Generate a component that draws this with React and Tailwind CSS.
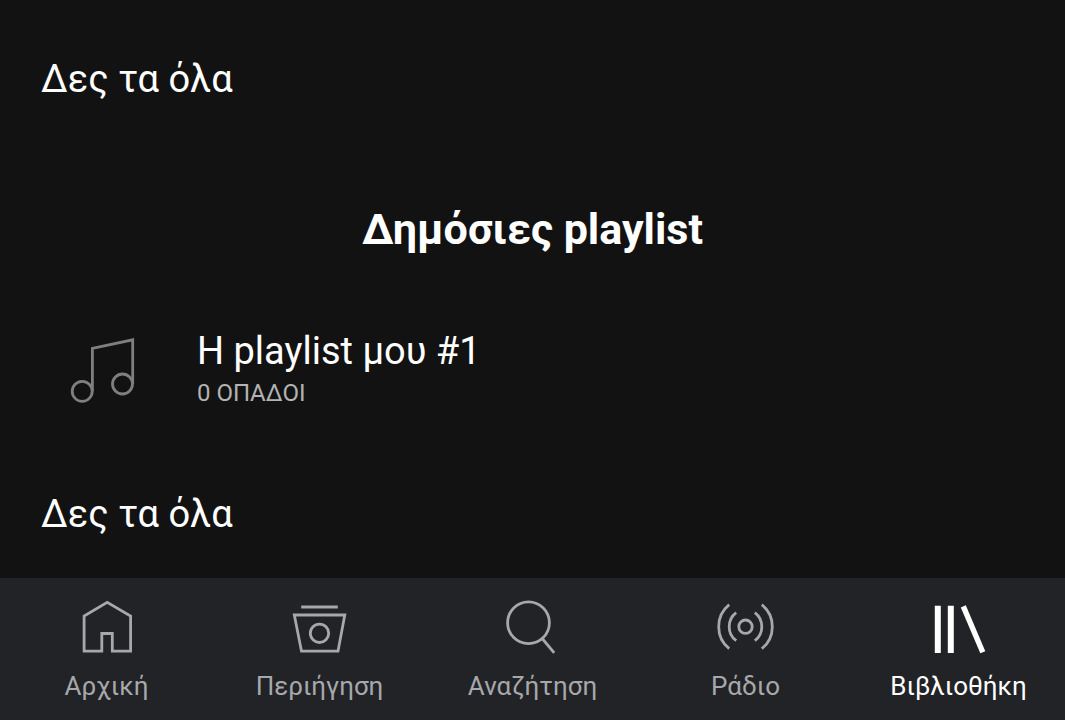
import React, { useState } from "react";
import clsx from "clsx";

const tabs = [
  { id: "home", label: "Αρχική", Icon: HomeIcon },
  { id: "browse", label: "Περιήγηση", Icon: BrowseIcon },
  { id: "search", label: "Αναζήτηση", Icon: SearchIcon },
  { id: "radio", label: "Ράδιο", Icon: RadioIcon },
  { id: "library", label: "Βιβλιοθήκη", Icon: LibraryIcon },
];

const playlists = [{ id: 1, name: "Η playlist μου #1", followers: 0 }];

function TabSvg({ children }) {
  return (
    <svg
      viewBox="0 0 64 64"
      className="size-16"
      fill="none"
      stroke="currentColor"
      strokeWidth="2.8"
      aria-hidden="true"
    >
      {children}
    </svg>
  );
}

function HomeIcon() {
  return (
    <TabSvg>
      <path d="M9.1 57.2V22L32.2 8.4L55.6 22V57.2H37.3V39.5H26.8V57.2Z" />
    </TabSvg>
  );
}

function BrowseIcon() {
  return (
    <TabSvg>
      <path d="M13.2 13H49.8M6.3 21H56.8L50 57.2H13.5Z" />
      <circle cx="31.5" cy="39.3" r="9.2" />
    </TabSvg>
  );
}

function SearchIcon() {
  return (
    <TabSvg>
      <circle cx="27.5" cy="28.8" r="20.9" />
      <path d="M41.2 44.5L53.2 58.8" />
    </TabSvg>
  );
}

function RadioIcon() {
  return (
    <TabSvg>
      <circle cx="31.5" cy="32.7" r="6.7" />
      <path d="M22.2 18.7A17.5 17.5 0 0 0 22.2 46.7M40.8 18.7A17.5 17.5 0 0 1 40.8 46.7" />
      <path d="M15.2 10.7A28.3 28.3 0 0 0 15.2 54.7M47.8 10.7A28.3 28.3 0 0 1 47.8 54.7" />
    </TabSvg>
  );
}

function LibraryIcon() {
  return (
    <TabSvg>
      <path strokeWidth="6" d="M10.8 11.7V59M23.8 11.7V59" />
      <path strokeWidth="5.4" d="M36.3 12.4L55.8 58.2" />
    </TabSvg>
  );
}

function NoteIcon() {
  return (
    <svg
      viewBox="0 0 72 72"
      className="size-18"
      fill="none"
      stroke="currentColor"
      strokeWidth="2.8"
      aria-hidden="true"
    >
      <circle cx="15.2" cy="56.3" r="10" />
      <circle cx="55.5" cy="49" r="10" />
      <path d="M25.4 56.3V13.4L65.7 4.8V49" />
    </svg>
  );
}

function SeeAll() {
  return (
    <a href="#all" className="block px-[41px] text-[38px] leading-12">
      Δες τα όλα
    </a>
  );
}

export default function App() {
  const [active, setActive] = useState("library");

  return (
    <div className="flex min-h-screen flex-col bg-[#121212] font-['Roboto',sans-serif] text-white">
      <main className="flex-1 pt-[55px] pb-10">
        <SeeAll />

        <h2 className="mt-[98px] text-center text-[43px] leading-14 font-bold">
          Δημόσιες playlist
        </h2>

        <ul className="mt-[70px] mb-[79px]">
          {playlists.map((item) => (
            <li key={item.id}>
              <a href="#playlist" className="flex gap-8 px-[41px]">
                <span className="flex w-31 justify-center pt-2 text-[#7f7f7f]">
                  <NoteIcon />
                </span>
                <span>
                  <span className="block text-[38px] leading-12">
                    {item.name}
                  </span>
                  <span className="block text-2xl leading-9 text-[#b3b3b3]">
                    {item.followers} ΟΠΑΔΟΙ
                  </span>
                </span>
              </a>
            </li>
          ))}
        </ul>

        <SeeAll />
      </main>

      <nav className="grid grid-cols-5 bg-[#222326] pt-4 pb-[18px]">
        {tabs.map(({ id, label, Icon }) => (
          <button
            key={id}
            type="button"
            onClick={() => setActive(id)}
            className={clsx(
              "flex flex-col items-center gap-3 text-[26px] leading-8",
              active === id ? "text-white" : "text-[#a7a8ab]"
            )}
          >
            <Icon />
            {label}
          </button>
        ))}
      </nav>
    </div>
  );
}
